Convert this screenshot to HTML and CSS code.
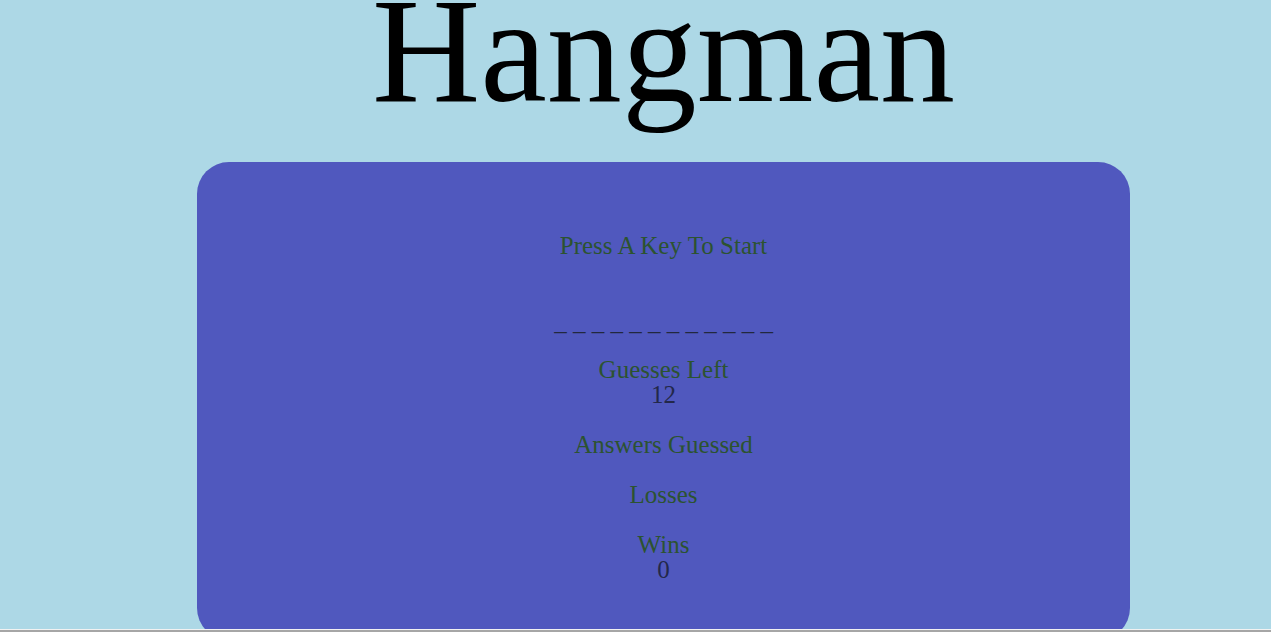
FILE: index.html
```html
<!DOCTYPE html>
<html lang="en">
<head>
<meta charset="utf-8">
<title>Hangman</title>
<link rel="stylesheet" href="styles.css">
</head>
<body>
<div class="page">
  <h1 class="title">Hangman</h1>
  <section class="board">
    <p class="prompt">Press A Key To Start</p>
    <p class="word">_ _ _ _ _ _ _ _ _ _ _ _</p>
    <div class="stat stat-first">
      <div class="label">Guesses Left</div>
      <div class="value">12</div>
    </div>
    <div class="stat">
      <div class="label">Answers Guessed</div>
      <div class="value"></div>
    </div>
    <div class="stat">
      <div class="label">Losses</div>
      <div class="value"></div>
    </div>
    <div class="stat">
      <div class="label">Wins</div>
      <div class="value">0</div>
    </div>
  </section>
</div>
<div class="hscroll"></div>
</body>
</html>
```
FILE: styles.css
```css
html, body {
  margin: 0;
  padding: 0;
  height: 100%;
  overflow: hidden;
}
body {
  background: #add8e6;
  font-family: "Liberation Serif", "Times New Roman", serif;
}
.page {
  padding-left: 56px;
  display: flex;
  flex-direction: column;
  align-items: center;
}
.title {
  margin: 0 0 62px 0;
  font-size: 150px;
  font-weight: normal;
  line-height: 100px;
  height: 100px;
  color: #000;
}
.board {
  box-sizing: border-box;
  width: 933px;
  height: 478px;
  flex-shrink: 0;
  background: #5058be;
  border-radius: 32px;
  padding-top: 71px;
  display: flex;
  flex-direction: column;
  align-items: center;
  font-size: 25px;
  line-height: 25px;
  color: #2c5330;
  text-align: center;
}
.prompt {
  margin: 0 0 51px 0;
}
.word {
  margin: 0 0 23px 0;
  color: #22283e;
}
.stat {
  display: flex;
  flex-direction: column;
  align-items: center;
}
.stat-first {
  margin-bottom: 25px;
}
.value {
  min-height: 25px;
  color: #23284a;
}
.hscroll {
  position: fixed;
  left: 0;
  right: 0;
  bottom: 0;
  height: 3px;
  background: #a6a6a6;
  border-top: 1px solid #f2f2f2;
  box-sizing: border-box;
}
```
